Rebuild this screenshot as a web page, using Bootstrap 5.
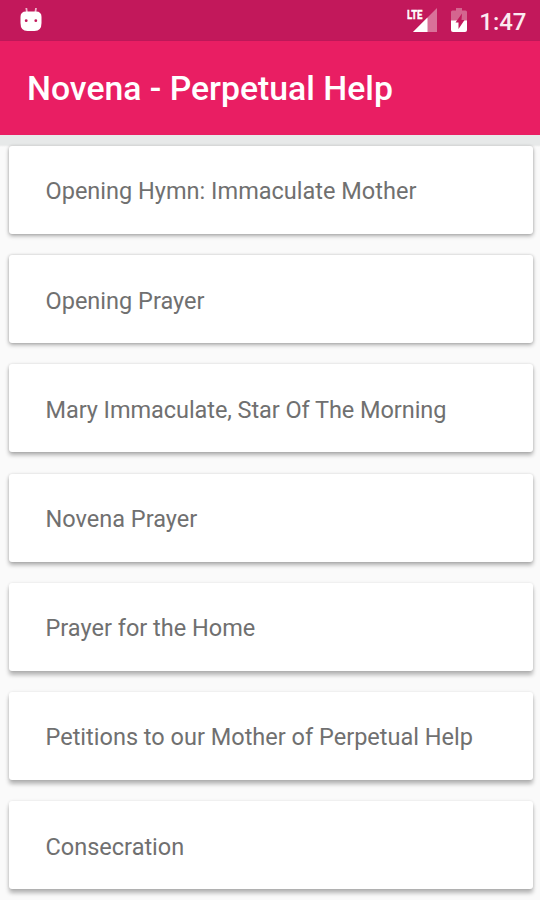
<!DOCTYPE html>
<html lang="en">
<head>
<meta charset="utf-8">
<meta name="viewport" content="width=device-width, initial-scale=1">
<title>Novena - Perpetual Help</title>
<link href="https://cdn.jsdelivr.net/npm/bootstrap@5.3.0/dist/css/bootstrap.min.css" rel="stylesheet">
<style>
body{font-family:Roboto,sans-serif;background:#fafafa;height:900px;overflow:hidden}
.status{height:41px;background:#c2185b;padding:0 13.5px 0 20px}
.clock{font-size:24px;font-weight:500;line-height:41px;padding-top:3px;margin-left:11px;color:#fbeaf1}
.lte{font:700 13px Roboto,sans-serif}
.appbar{height:94px;background:#e91e63;padding:2px 27px 0;box-shadow:0 1px 2px rgba(0,0,0,.25)}
.title{font-size:33.75px;font-weight:500;line-height:1;white-space:nowrap}
.list{padding:11px 7.5px 0 8.500px;gap:21.2px;background:linear-gradient(#e7e9e9 0 10px,transparent 12px)}
.item{height:88px;flex:none;border:0;border-radius:3px;padding:4.500px 0 0 37px;box-shadow:0 2px 4px rgba(0,0,0,.3),0 0 3px rgba(0,0,0,.16)}
.item:nth-child(n+3){box-shadow:0 3px 4px rgba(0,0,0,.3),0 0 3px rgba(0,0,0,.12)}
.item:nth-child(n+5){box-shadow:0 4px 4px rgba(0,0,0,.28),0 0 3px rgba(0,0,0,.1)}
.item span{font-size:23.52px;line-height:1;color:#707070;white-space:nowrap}
.item .tight{letter-spacing:-.07px}
</style>
</head>
<body>
<header class="status d-flex align-items-center text-white">
<svg width="22" height="41" viewBox="20 0 22 41"><path d="M26.300 8l.7 5M36 8l-.7 5" stroke="#eeb5cc" stroke-width="1.8"/><path d="M20.500 17q0-5.500 5.500-5.500h10q5.500 0 5.500 5.500v6q0 8-7 8h-7q-7 0-7-8z" fill="#fff"/><circle cx="26.2" cy="20.7" r="1.4" fill="#c2185b"/><circle cx="35.8" cy="20.7" r="1.4" fill="#c2185b"/></svg>
<svg class="ms-auto" width="62" height="41" viewBox="406 0 62 41"><path d="M437 8v24h-24z" fill="#d97199"/><path d="M427.500 17.500V32H413z" fill="#fff"/><path d="M405 6h18.500v14h-18.500z" fill="#c2185b"/><text class="lte" x="407" y="18.5" textLength="15.5" lengthAdjust="spacingAndGlyphs" fill="#fff" stroke="#fff" stroke-width=".4">LTE</text>
<path d="M451 12q0-1.500 1.500-1.500H456V8h6v2.500h3.500q1.500 0 1.500 1.500v9h-16z" fill="#d4658f"/><path d="M451 20.500h16V30q0 2-2 2h-12q-2 0-2-2z" fill="#fff"/><path d="M462 13.500l-6.500 9h3v6.500l6-9h-3z" fill="#c2185b"/></svg>
<div class="clock">1:47</div>
</header>
<nav class="appbar d-flex align-items-center text-white"><h1 class="title m-0">Novena - Perpetual Help</h1></nav>
<main class="list d-flex flex-column">
<div class="item card justify-content-center"><span>Opening Hymn: Immaculate Mother</span></div>
<div class="item card justify-content-center"><span>Opening Prayer</span></div>
<div class="item card justify-content-center"><span class="tight">Mary Immaculate, Star Of The Morning</span></div>
<div class="item card justify-content-center"><span>Novena Prayer</span></div>
<div class="item card justify-content-center"><span>Prayer for the Home</span></div>
<div class="item card justify-content-center"><span>Petitions to our Mother of Perpetual Help</span></div>
<div class="item card justify-content-center"><span>Consecration</span></div>
</main>
</body>
</html>
